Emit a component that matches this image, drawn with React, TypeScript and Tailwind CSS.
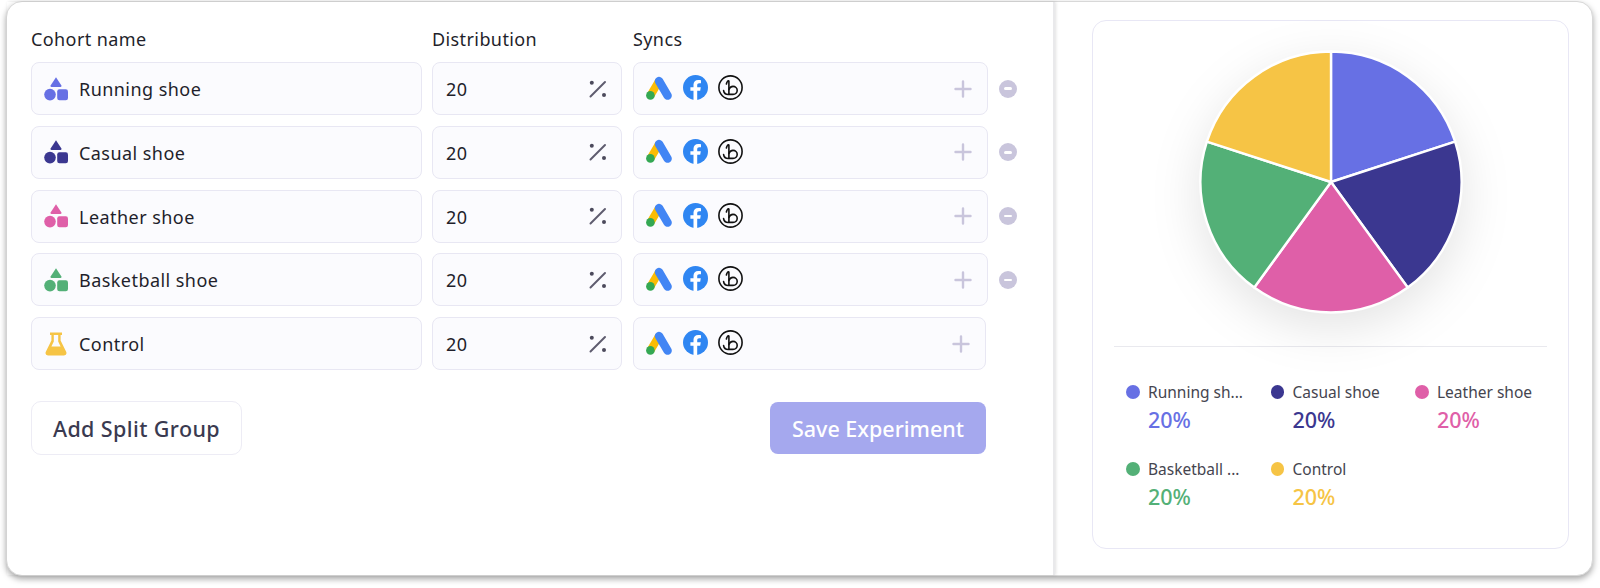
import React from "react";

const BLUE = "#6770E4";
const NAVY = "#3B3790";
const PINK = "#DF5FA8";
const GREEN = "#53B077";
const YELLOW = "#F6C445";

const cohorts = [
  { name: "Running shoe", color: BLUE, removable: true },
  { name: "Casual shoe", color: NAVY, removable: true },
  { name: "Leather shoe", color: PINK, removable: true },
  { name: "Basketball shoe", color: GREEN, removable: true },
  { name: "Control", color: YELLOW, removable: false },
];

const legend = [
  { label: "Running sh...", color: BLUE, text: "text-[#6770E4]" },
  { label: "Casual shoe", color: NAVY, text: "text-[#3B3790]" },
  { label: "Leather shoe", color: PINK, text: "text-[#DF5FA8]" },
  { label: "Basketball ...", color: GREEN, text: "text-[#53B077]" },
  { label: "Control", color: YELLOW, text: "text-[#F6C445]" },
];

function ShapesIcon({ color }: { color: string }) {
  return (
    <svg width="24" height="24" viewBox="0 0 24 24" fill={color}>
      <path d="M12 0.3 L17.4 8.4 Q17.8 9.9 16.4 10 H7.6 Q6.2 9.9 6.6 8.4 Z" />
      <circle cx="6" cy="17.6" r="5.8" />
      <rect x="13.2" y="12.2" width="10.8" height="11" rx="2.2" />
    </svg>
  );
}

function FlaskIcon({ color }: { color: string }) {
  return (
    <svg width="22" height="24" viewBox="0 0 22 24" fill="none">
      <path d="M5 0.5 H17 V3 H15.6 V8.5 L21.3 20 Q22.2 23.5 19 23.5 H3 Q-0.2 23.5 0.7 20 L6.4 8.5 V3 H5 Z" fill={color} />
      <path d="M8.8 3 H13.2 V9.4 L15.6 14.5 H6.4 L8.8 9.4 Z" fill="#FBFBFE" />
    </svg>
  );
}

function PercentIcon() {
  return (
    <svg width="18" height="18" viewBox="0 0 18 18" className="shrink-0">
      <path d="M1.5 16.5 L16 2" stroke="#5E5B6E" strokeWidth="2" strokeLinecap="round" />
      <circle cx="2.8" cy="2.8" r="2" fill="#4C4A5C" />
      <circle cx="15" cy="15" r="2" fill="#4C4A5C" />
    </svg>
  );
}

function GoogleAdsIcon() {
  return (
    <svg width="26" height="24" viewBox="0 0 26 24" fill="none">
      <path d="M4.6 19.2 L13 5" stroke="#FBBC04" strokeWidth="8" />
      <path d="M13 5 L21.6 19.6" stroke="#4285F4" strokeWidth="8.4" strokeLinecap="round" />
      <circle cx="4.4" cy="19.4" r="4.3" fill="#34A853" />
    </svg>
  );
}

function FacebookIcon() {
  return (
    <svg width="25" height="25" viewBox="0 0 25 25">
      <circle cx="12.5" cy="12.5" r="12.5" fill="#2F86F2" />
      <path
        d="M14.2 25 V15.8 H17.2 L17.8 12.3 H14.2 V10.1 C14.2 9 14.8 8.2 16.2 8.2 H18 V5.2 C17.2 5 16.2 4.9 15.2 4.9 C12.4 4.9 10.5 6.6 10.5 9.6 V12.3 H7.4 V15.8 H10.5 V25 Z"
        fill="#fff"
      />
    </svg>
  );
}

function CircleBIcon() {
  return (
    <svg width="25" height="25" viewBox="0 0 25 25" fill="none" stroke="#111" strokeLinecap="round">
      <circle cx="12.5" cy="12.5" r="11.6" strokeWidth="1.6" />
      <path
        d="M5.6 15.6 C6 18.6 8.4 19.6 11 19.4 H15 C17.5 19.4 19.2 17.5 19.2 15.2 C19.2 13 17.3 11.4 15 11.4 C13 11.4 11.5 12.8 10.9 14.5"
        strokeWidth="1.6"
      />
      <path d="M8.4 9 C8.8 6.6 10.4 5 10.9 6 V19" strokeWidth="1.6" />
    </svg>
  );
}

function Field({ className, children }: { className: string; children: React.ReactNode }) {
  return (
    <div className={`h-[53px] flex items-center bg-[#FBFBFE] border border-[#E8E7F3] rounded-lg ${className}`}>
      {children}
    </div>
  );
}

function CohortRow({ name, color, removable }: { name: string; color: string; removable: boolean }) {
  return (
    <div className="flex items-center">
      <Field className="w-[391px] pl-[12px]">
        <div className="w-[24px] flex justify-center">
          {removable ? <ShapesIcon color={color} /> : <FlaskIcon color={color} />}
        </div>
        <span className="ml-[11px] text-[18px] tracking-[0.45px] text-[#1F1F2B] mt-[2px]">{name}</span>
      </Field>
      <Field className="w-[190px] ml-[10px] pl-[13px] pr-[14px] justify-between">
        <span className="text-[18px] tracking-[0.45px] text-[#1F1F2B] mt-[2px]">20</span>
        <PercentIcon />
      </Field>
      <Field className={`ml-[11px] pl-[12px] pr-[15px] ${removable ? "w-[355px]" : "w-[353px]"}`}>
        <div className="flex items-center gap-[10.5px] -mt-[2px]">
          <GoogleAdsIcon />
          <FacebookIcon />
          <CircleBIcon />
        </div>
        <svg width="18" height="18" viewBox="0 0 18 18" className="ml-auto" stroke="#C9C5DC" strokeWidth="2.4" strokeLinecap="round">
          <path d="M9 1.5 V16.5 M1.5 9 H16.5" />
        </svg>
      </Field>
      {removable && (
        <div className="ml-[11px] w-[18px] h-[18px] rounded-full bg-[#C9C5DC] flex items-center justify-center">
          <div className="w-[8px] h-[2.5px] rounded-full bg-white" />
        </div>
      )}
    </div>
  );
}

function PieChart() {
  const cx = 134;
  const cy = 134;
  const r = 130.5;
  const colors = [BLUE, NAVY, PINK, GREEN, YELLOW];
  const point = (i: number) => {
    const a = (i * 72 * Math.PI) / 180;
    return `${cx + r * Math.sin(a)} ${cy - r * Math.cos(a)}`;
  };
  return (
    <svg width="268" height="268" viewBox="0 0 268 268" className="overflow-visible drop-shadow-[0_14px_24px_rgba(0,0,0,0.11)]">
      {colors.map((c, i) => (
        <path
          key={c}
          d={`M${cx} ${cy} L${point(i)} A${r} ${r} 0 0 1 ${point(i + 1)} Z`}
          fill={c}
          stroke="#fff"
          strokeWidth="2.4"
          strokeLinejoin="round"
        />
      ))}
    </svg>
  );
}

export default function App() {
  return (
    <div className="w-[1600px] h-[588px] bg-white overflow-hidden pl-[6px] pt-px" style={{ fontFamily: "'Noto Sans', 'Lato', sans-serif" }}>
      <div className="w-[1587px] h-[575px] flex bg-white rounded-[16px] border border-[#D8D8D8] shadow-[0_3px_6px_rgba(0,0,0,0.35)]">
        <div className="w-[1048px] border-r-2 border-[#E9E9EB] shadow-[1px_0_3px_rgba(0,0,0,0.12)] pl-[24px] pt-[24px]">
          <div className="flex text-[18px] tracking-[0.4px] text-[#1F1F2B] h-[27px] items-center">
            <span className="w-[401px]">Cohort name</span>
            <span className="w-[201px]">Distribution</span>
            <span>Syncs</span>
          </div>
          <div className="flex flex-col gap-[10.75px] mt-[9px]">
            {cohorts.map((c) => (
              <CohortRow key={c.name} name={c.name} color={c.color} removable={c.removable} />
            ))}
          </div>
          <div className="flex items-center mt-[31px] w-[955px] justify-between">
            <button className="w-[211px] h-[54px] border border-[#EDECF5] rounded-[10px] pt-[2px] text-[21.5px] tracking-[0.4px] font-medium text-[#3A3A50] bg-white">
              Add Split Group
            </button>
            <button className="w-[216px] h-[52px] rounded-lg pt-[2px] text-[21.5px] font-medium text-white bg-[#A5A8EE]">
              Save Experiment
            </button>
          </div>
        </div>
        <div className="flex-1 pl-[37px] pt-[18px]">
          <div className="w-[477px] h-[529px] border border-[#E8E7F5] rounded-[14px] px-[21px] pt-[27px]">
            <div className="flex justify-center">
              <PieChart />
            </div>
            <div className="h-px bg-[#E9E9EE] mt-[30px]" />
            <div className="grid grid-cols-[144.5px_144.5px_144px] gap-y-[21px] mt-[33px] pl-[12px]">
              {legend.map((l) => (
                <div key={l.label} className="flex">
                  <span className="w-[13.5px] h-[13.5px] rounded-full mt-[5px]" style={{ backgroundColor: l.color }} />
                  <div className="ml-[8.5px]">
                    <div className="text-[15.5px] leading-[24px] text-[#45454F]">{l.label}</div>
                    <div className={`text-[21.5px] leading-[32px] font-medium ${l.text}`}>20%</div>
                  </div>
                </div>
              ))}
            </div>
          </div>
        </div>
      </div>
    </div>
  );
}
